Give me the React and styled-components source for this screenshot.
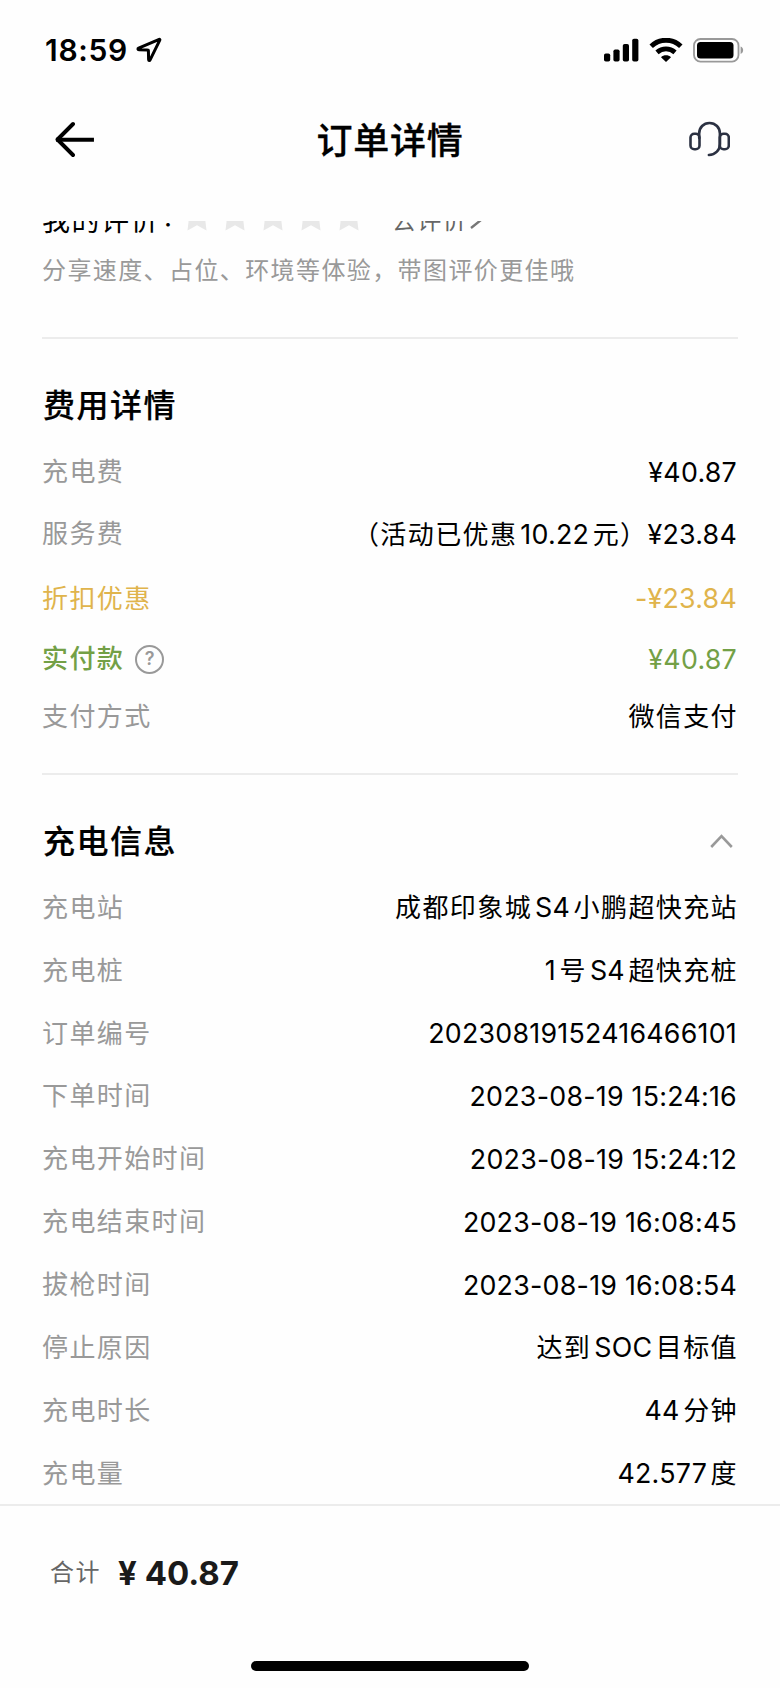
import React from 'react'
import styled, { createGlobalStyle } from 'styled-components'

const feeRows = [
  { label: '充电费', value: '¥40.87', height: 64 },
  { label: '服务费', value: '（活动已优惠10.22元）¥23.84', height: 60 },
  { label: '折扣优惠', value: '-¥23.84', height: 69, color: '#e0b44c' },
  { label: '实付款', value: '¥40.87', height: 52, color: '#73a046', strong: true, help: true },
  { label: '支付方式', value: '微信支付', height: 64 },
]

const chargeRows = [
  { label: '充电站', value: '成都印象城S4小鹏超快充站' },
  { label: '充电桩', value: '1号S4超快充桩' },
  { label: '订单编号', value: '20230819152416466101' },
  { label: '下单时间', value: '2023-08-19 15:24:16' },
  { label: '充电开始时间', value: '2023-08-19 15:24:12' },
  { label: '充电结束时间', value: '2023-08-19 16:08:45' },
  { label: '拔枪时间', value: '2023-08-19 16:08:54' },
  { label: '停止原因', value: '达到SOC目标值' },
  { label: '充电时长', value: '44分钟' },
  { label: '充电量', value: '42.577度' },
]

// Latin runs get their own tracking and a small gap next to Chinese characters
const MixedText = ({ text }) => {
  const parts = text.match(/[\x20-\xff]+|[^\x20-\xff]+/g)
  return parts.map((part, i) => {
    if (!/[\x20-\xff]/.test(part)) return <span key={i}>{part}</span>
    const prev = parts[i - 1]
    return (
      <Latin
        key={i}
        $before={Boolean(prev) && !prev.endsWith('）')}
        $after={i < parts.length - 1}
      >
        {part}
      </Latin>
    )
  })
}

const InfoRow = ({ label, value, height = 62.9, color, strong, help }) => (
  <Row $height={height}>
    <Label $color={color} $strong={strong}>
      {label}
      {help && <Help>?</Help>}
    </Label>
    <Value $color={color}>
      <MixedText text={value} />
    </Value>
  </Row>
)

const App = () => {
  return (
    <Screen>
      <GlobalStyle />
      <StatusBar>
        <Clock>18:59</Clock>
        <svg width="26" height="26" viewBox="0 0 26 26" fill="none">
          <path
            d="M23.2 2.4 2.6 11.2c-1 .5-.8 1.5.3 1.5l8.8.2c.5 0 .7.2.7.7l.2 8.9c0 1.2 1 1.4 1.5.3L23.8 3.1c.3-.6-.1-.9-.6-.7Z"
            stroke="#000"
            strokeWidth="3"
            strokeLinejoin="round"
          />
        </svg>
        <StatusIcons>
          <svg width="35" height="24" viewBox="0 0 35 24">
            <rect x="0" y="15.5" width="6.2" height="8" rx="1.8" />
            <rect x="9.4" y="11.5" width="6.2" height="12" rx="1.8" />
            <rect x="18.8" y="6" width="6.2" height="17.5" rx="1.8" />
            <rect x="28.2" y="0.7" width="6.2" height="22.8" rx="1.8" />
          </svg>
          <svg width="34" height="24" viewBox="0 0 34 24" fill="none" stroke="#000">
            <path d="M2.2 8.2C10.6.3 23.4.3 31.8 8.2" strokeWidth="5" />
            <path d="M8 14.4c5.2-4.700 12.8-4.700 18 0" strokeWidth="4.8" />
            <path d="M17 24l-5-4.800c2.700-2.600 7.300-2.600 10 0Z" fill="#000" stroke="none" />
          </svg>
          <svg width="51" height="25" viewBox="0 0 51 25">
            <rect x="1" y="1" width="44.5" height="22.6" rx="6.5" fill="#fff" stroke="#999" strokeWidth="1.8" />
            <rect x="4" y="4" width="36.5" height="16.6" rx="3.6" />
            <path d="M47.6 8.6c3.4 1.2 3.4 6.2 0 7.4Z" fill="#999" />
          </svg>
        </StatusIcons>
      </StatusBar>

      <NavBar>
        <svg width="40" height="36" viewBox="0 0 40 36" fill="none" stroke="#000" strokeWidth="3.9" strokeLinecap="round" strokeLinejoin="round">
          <path d="M18 3 2.5 18.500 18 34" />
          <path d="M3 18.800h34" strokeLinecap="square" />
        </svg>
        <Title>订单详情</Title>
        <svg width="41" height="36" viewBox="0 0 41 36" fill="none" stroke="#2b3142" strokeWidth="2.6" strokeLinecap="round" strokeLinejoin="round">
          <rect x="1.5" y="12.7" width="9" height="15.5" rx="3.8" />
          <rect x="30.8" y="12.7" width="9" height="15.5" rx="3.8" />
          <path d="M10.2 17V12.5C10.2 6.5 14.5 2 20.5 2s10.400 4.500 10.400 10.500V23c0 6-4.400 10.800-11 11" />
        </svg>
      </NavBar>

      <Content>
        <Review>
          <ReviewTitle>
            我的评价<Colon>：</Colon>
          </ReviewTitle>
          <Stars>
            {[0, 1, 2, 3, 4].map((n) => (
              <svg key={n} width="24" height="24" viewBox="0 0 24 24" fill="#e8e8e8">
                <path d="M12 0l3.6 7.6 8.4 1.2-3.6 5.2L21.5 23.600 12 18.200 2.500 23.600 3.600 14 0 8.800l8.400-1.200Z" />
              </svg>
            ))}
          </Stars>
          <ReviewLink>
            去评价
            <svg width="13" height="18" viewBox="0 0 13 18" fill="none" stroke="#777" strokeWidth="2.4">
              <path d="M1 0.500 11 8 1 16" />
            </svg>
          </ReviewLink>
        </Review>
        <Hint>分享速度、占位、环境等体验，带图评价更佳哦</Hint>

        <Section $top={36} $bottom={24}>
          <SectionHead $height={65}>费用详情</SectionHead>
          {feeRows.map((row) => (
            <InfoRow key={row.label} {...row} />
          ))}
        </Section>

        <Section $top={35} $bottom={0}>
          <SectionHead $height={66.3}>
            充电信息
            <svg width="23" height="15" viewBox="0 0 23 15" fill="none" stroke="#999" strokeWidth="2.6">
              <path d="M1.2 13 11.5 2.200 21.800 13" />
            </svg>
          </SectionHead>
          {chargeRows.map((row) => (
            <InfoRow key={row.label} {...row} />
          ))}
        </Section>
      </Content>

      <Footer>
        <Total>
          <TotalLabel>合计</TotalLabel>
          <TotalPrice>¥ 40.87</TotalPrice>
        </Total>
        <HomeBar />
      </Footer>
    </Screen>
  )
}

export default App

const GlobalStyle = createGlobalStyle`
  body {
    margin: 0;
    background-color: #fff;
  }
  svg {
    display: block;
    flex: none;
  }
`

const Screen = styled.div`
  display: flex;
  flex-direction: column;
  width: 780px;
  height: 1688px;
  overflow: hidden;
  background-color: #fefefe;
  color: #000;
  font-family: Inter, 'Noto Sans CJK SC', sans-serif;
  font-size: 26px;
  line-height: 36px;
  white-space: nowrap;
`

const StatusBar = styled.div`
  display: flex;
  align-items: center;
  box-sizing: border-box;
  flex: none;
  height: 100px;
  padding: 0 36px 0 45px;
`

const Clock = styled.span`
  width: 91px;
  font-size: 30px;
  font-weight: 600;
  letter-spacing: 0.7px;
`

const StatusIcons = styled.div`
  display: flex;
  align-items: center;
  gap: 10px;
  margin-left: auto;
`

const NavBar = styled.div`
  display: flex;
  align-items: center;
  justify-content: space-between;
  box-sizing: border-box;
  flex: none;
  height: 121px;
  padding: 0 50px 43px 55px;
`

const Title = styled.h1`
  margin: 3px 4px 0 0;
  font-size: 36px;
  font-weight: 500;
  line-height: 52px;
  letter-spacing: 0.7px;
  -webkit-text-stroke: 0.3px #000;
`

const Content = styled.div`
  flex: none;
  box-sizing: border-box;
  height: 1283px;
  padding: 0 42px;
  overflow: hidden;
`

/* scrolled half way under the nav bar */
const Review = styled.div`
  display: flex;
  align-items: center;
  height: 40px;
  margin-top: -22px;
`

const ReviewTitle = styled.span`
  width: 143px;
  font-size: 28px;
  letter-spacing: 1.5px;
`

const Colon = styled.span`
  font-size: 24px;
  vertical-align: 5px;
  margin-left: 2px;
`

const Stars = styled.div`
  display: flex;
  gap: 14px;
  width: 207px;
`

const ReviewLink = styled.span`
  display: flex;
  align-items: center;
  gap: 2px;
  margin-top: 3px;
  color: #666;
  font-size: 24px;
  letter-spacing: 1.2px;
`

const Hint = styled.p`
  height: 36px;
  margin: 13px 0 49px;
  color: #999;
  font-size: 24px;
  line-height: 38px;
  letter-spacing: 1.4px;
`

const Section = styled.section`
  padding: ${({ $top, $bottom }) => `${$top}px 0 ${$bottom}px`};
  border-top: 2px solid #ececec;
`

const SectionHead = styled.h2`
  display: flex;
  align-items: center;
  justify-content: space-between;
  box-sizing: border-box;
  height: ${({ $height }) => $height}px;
  margin: 0;
  padding: 0 5px 3px 1px;
  font-size: 32px;
  font-weight: 500;
  letter-spacing: 1.5px;
  -webkit-text-stroke: 0.2px #000;
`

const Row = styled.div`
  display: flex;
  align-items: center;
  justify-content: space-between;
  height: ${({ $height }) => $height}px;
  letter-spacing: 1.4px;
`

const Label = styled.span`
  display: flex;
  align-items: center;
  color: ${({ $color }) => $color || '#999'};
  font-weight: ${({ $strong }) => ($strong ? 500 : 400)};
`

const Value = styled.span`
  color: ${({ $color }) => $color || '#000'};
`

const Latin = styled.span`
  margin-left: ${({ $before }) => ($before ? 3 : 0)}px;
  margin-right: ${({ $after }) => ($after ? 3.5 : 1)}px;
  font-size: 26.8px;
  letter-spacing: 0.25px;
`

const Help = styled.span`
  display: flex;
  align-items: center;
  justify-content: center;
  box-sizing: border-box;
  width: 29px;
  height: 29px;
  margin-left: 11px;
  border: 2px solid #999;
  border-radius: 50%;
  color: #999;
  font-size: 18px;
  font-weight: 600;
  letter-spacing: 0;
`

const Footer = styled.div`
  display: flex;
  flex-direction: column;
  align-items: center;
  flex: 1;
  border-top: 2px solid #ececec;
`

const Total = styled.div`
  display: flex;
  align-items: center;
  box-sizing: border-box;
  width: 100%;
  height: 134px;
  padding-left: 50px;
`

const TotalLabel = styled.span`
  width: 68px;
  color: #666;
  font-size: 24px;
  letter-spacing: 1.5px;
`

const TotalPrice = styled.strong`
  color: #1a1a1a;
  font-size: 33px;
  font-weight: 700;
`

const HomeBar = styled.div`
  width: 278px;
  height: 10px;
  margin-top: 21px;
  border-radius: 5px;
  background-color: #000;
`
